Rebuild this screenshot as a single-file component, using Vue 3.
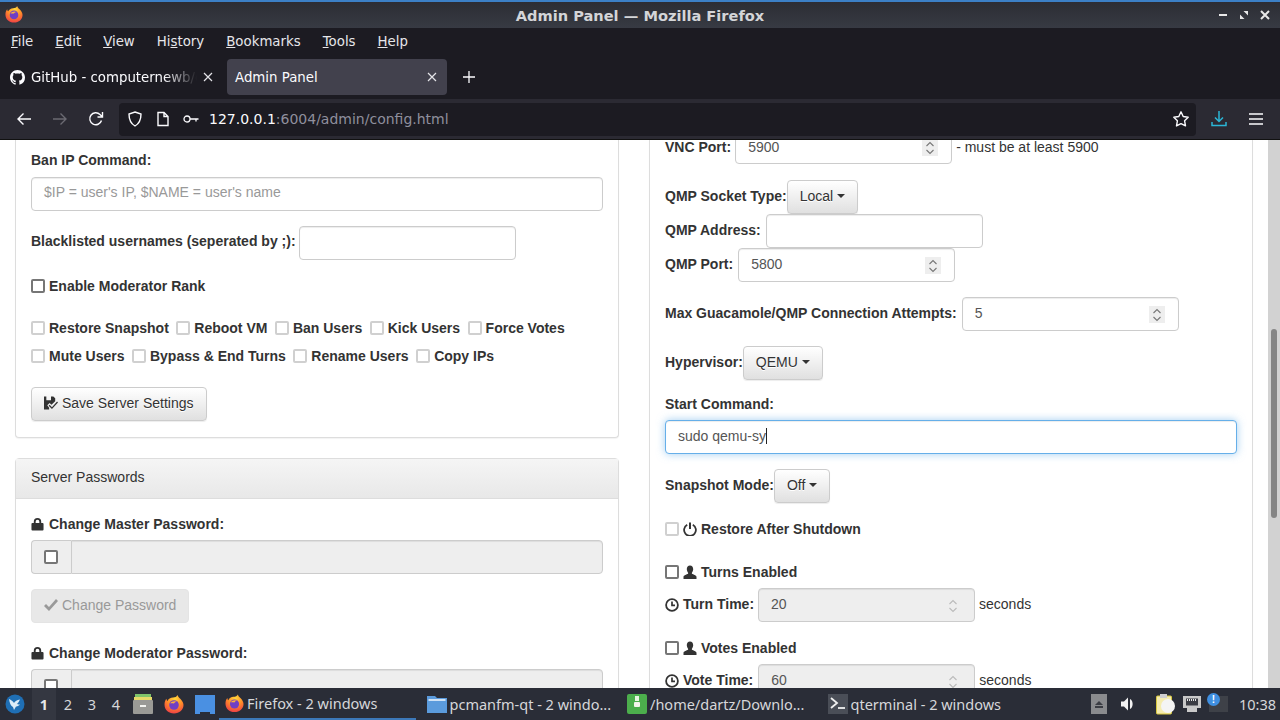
<script setup>
const menus = [
  { pre: '', key: 'F', post: 'ile' },
  { pre: '', key: 'E', post: 'dit' },
  { pre: '', key: 'V', post: 'iew' },
  { pre: 'Hi', key: 's', post: 'tory' },
  { pre: '', key: 'B', post: 'ookmarks' },
  { pre: '', key: 'T', post: 'ools' },
  { pre: '', key: 'H', post: 'elp' }
]
const permsA = ['Restore Snapshot', 'Reboot VM', 'Ban Users', 'Kick Users', 'Force Votes']
const permsB = ['Mute Users', 'Bypass & End Turns', 'Rename Users', 'Copy IPs']
</script>

<template>
  <div class="screen">
    <svg width="0" height="0" class="defs">
      <defs>
        <radialGradient id="fxg" cx="0.55" cy="0.2" r="0.95">
          <stop offset="0" stop-color="#ffd83a" />
          <stop offset="0.45" stop-color="#ff8a2a" />
          <stop offset="1" stop-color="#e8264f" />
        </radialGradient>
        <symbol id="fx" viewBox="0 0 20 20">
          <path d="M13.5 1c.4 1.6 1.4 2.4 3 4 2.2 2.300 3 4.500 3 6 0 4.800-4 8.500-9.500 8.500S.5 15.800.5 10.500C.5 8 1.300 6 2.500 4.700 2.600 6 3 6.800 3.500 7 4.300 5 6.500 3.500 9 3.500c2 0 3.800-.8 4.500-2.500z" fill="url(#fxg)" />
          <circle cx="10" cy="11" r="4.800" fill="#6f3fc4" />
          <path d="M6 9.500c1.500-2.500 5-3 7-1.500-1.500-.2-2.500.3-3 1.500-1.200 0-2.800-.4-4 0z" fill="#ffb03a" />
        </symbol>
        <symbol id="lock" viewBox="0 0 14 14">
          <path d="M3 6V4.500a4 4 0 0 1 8 0V6h1.500a1 1 0 0 1 1 1v6a1 1 0 0 1-1 1h-11a1 1 0 0 1-1-1V7a1 1 0 0 1 1-1zM5 6h4V4.500a2 2 0 0 0-4 0z" fill="#333" />
        </symbol>
        <symbol id="user" viewBox="0 0 14 14">
          <path d="M7 .5c2 0 3.200 1.500 3.200 3.600 0 1.500-.6 2.800-1.300 3.600v1.100c1.500.8 4.600 1.500 4.600 3.200V14H.5v-2c0-1.700 3.100-2.400 4.600-3.200V7.700C4.400 6.900 3.800 5.600 3.800 4.100 3.800 2 5 .5 7 .5z" fill="#333" />
        </symbol>
        <symbol id="clock" viewBox="0 0 14 14">
          <circle cx="7" cy="7" r="5.900" fill="none" stroke="#333" stroke-width="1.800" />
          <path d="M7 3.400V7.300H10" fill="none" stroke="#333" stroke-width="1.700" />
        </symbol>
        <symbol id="power" viewBox="0 0 14 14">
          <path d="M4.200 2.800a5.900 5.900 0 1 0 5.600 0" fill="none" stroke="#333" stroke-width="1.800" />
          <path d="M7 .5V7" fill="none" stroke="#333" stroke-width="2" />
        </symbol>
        <symbol id="spin" viewBox="0 0 10 16">
          <path d="M1.500 6 5 2.500 8.500 6M1.500 10 5 13.500 8.500 10" fill="none" stroke="currentColor" stroke-width="1.100" />
        </symbol>
      </defs>
    </svg>

    <header class="titlebar">
      <svg class="title-logo" width="18" height="20"><use href="#fx" /></svg>
      <div class="title-text">Admin Panel — Mozilla Firefox</div>
      <div class="wm">
        <svg width="10" height="10" viewBox="0 0 10 10"><path d="M1 5h8" stroke="#e8e8e8" stroke-width="2" /></svg>
        <svg width="10" height="10" viewBox="0 0 10 10"><path d="M1 9V4.500L5.500 9zM9 1v4.500L4.500 1z" fill="#e8e8e8" /></svg>
        <svg width="10" height="10" viewBox="0 0 10 10"><path d="M1 1l8 8M9 1l-8 8" stroke="#e8e8e8" stroke-width="2" /></svg>
      </div>
    </header>

    <nav class="menubar">
      <span v-for="m in menus" :key="m.key" class="menu-item">{{ m.pre }}<u>{{ m.key }}</u>{{ m.post }}</span>
    </nav>

    <div class="tabbar">
      <div class="tab">
        <svg width="15" height="15" viewBox="0 0 16 16"><path fill="#fbfbfe" d="M8 0C3.580 0 0 3.580 0 8c0 3.540 2.290 6.530 5.470 7.590.4.070.55-.17.55-.38 0-.19-.010-.82-.010-1.490-2.010.37-2.530-.49-2.690-.94-.090-.23-.48-.94-.82-1.130-.28-.15-.68-.52-.010-.53.630-.010 1.080.58 1.230.82.720 1.210 1.870.87 2.330.66.070-.52.280-.87.510-1.070-1.780-.2-3.640-.89-3.640-3.950 0-.87.310-1.590.820-2.150-.080-.2-.36-1.020.080-2.120 0 0 .67-.21 2.200.82.640-.18 1.320-.27 2-.27s1.360.090 2 .27c1.530-1.040 2.200-.82 2.200-.82.440 1.100.160 1.920.080 2.120.510.560.820 1.270.820 2.150 0 3.070-1.870 3.750-3.650 3.950.290.250.540.730.540 1.480 0 1.070-.010 1.930-.010 2.200 0 .21.150.460.550.380A8.010 8.010 0 0 0 16 8c0-4.420-3.580-8-8-8z" /></svg>
        <span class="tab-label fade">GitHub - computernewb/c</span>
        <svg class="tab-x" width="10" height="10" viewBox="0 0 10 10"><path d="M1 1l8 8M9 1l-8 8" stroke="#e4e4e8" stroke-width="1.200" /></svg>
      </div>
      <div class="tab active">
        <span class="tab-label">Admin Panel</span>
        <svg class="tab-x" width="10" height="10" viewBox="0 0 10 10"><path d="M1 1l8 8M9 1l-8 8" stroke="#e4e4e8" stroke-width="1.200" /></svg>
      </div>
      <svg class="plus" width="14" height="14" viewBox="0 0 14 14"><path d="M7 1v12M1 7h12" stroke="#fbfbfe" stroke-width="1.300" /></svg>
    </div>

    <div class="navbar">
      <svg class="nav-ic" width="16" height="16" viewBox="0 0 16 16"><path d="M15 8H2M7.500 2.500 2 8l5.500 5.500" fill="none" stroke="#fbfbfe" stroke-width="1.400" /></svg>
      <svg class="nav-ic" width="16" height="16" viewBox="0 0 16 16"><path d="M1 8h13M8.500 2.500 14 8l-5.500 5.500" fill="none" stroke="#6b6a72" stroke-width="1.400" /></svg>
      <svg class="nav-ic" width="16" height="16" viewBox="0 0 16 16"><path d="M13.500 9.500A6 6 0 1 1 12 3.500L14 5.500M14.500 1v5h-5" fill="none" stroke="#fbfbfe" stroke-width="1.400" /></svg>
      <div class="urlbar">
        <svg width="16" height="16" viewBox="0 0 16 16"><path d="M8 1l6 2c0 5.500-1.500 9.500-6 12C3.500 12.500 2 8.500 2 3z" fill="none" stroke="#fbfbfe" stroke-width="1.400" /></svg>
        <svg class="doc" width="14" height="16" viewBox="0 0 14 16"><path d="M2 1.500h6l4 4v9H2zM8 1.500v4h4" fill="none" stroke="#fbfbfe" stroke-width="1.400" /></svg>
        <svg class="key" width="16" height="10" viewBox="0 0 16 10"><circle cx="4" cy="5" r="3" fill="none" stroke="#fbfbfe" stroke-width="1.300" /><path d="M7 5h8.500M13 5v2.500" fill="none" stroke="#fbfbfe" stroke-width="1.300" /></svg>
        <span class="url"><b>127.0.0.1</b>:6004/admin/config.html</span>
        <svg class="star" width="18" height="18" viewBox="0 0 18 18"><path d="M9 1.800l2.200 4.700 5 .7-3.600 3.600.9 5.100L9 13.600l-4.500 2.300.9-5.100L1.800 7.200l5-.7z" fill="none" stroke="#fbfbfe" stroke-width="1.400" stroke-linejoin="round" /></svg>
      </div>
      <svg class="dl" width="16" height="18" viewBox="0 0 16 18"><path d="M8 1v10M4 7.500 8 11.500l4-4M1 12v3.500h14V12" fill="none" stroke="#2bb6d6" stroke-width="1.500" /></svg>
      <svg class="burger" width="14" height="12" viewBox="0 0 14 12"><path d="M0 1h14M0 6h14M0 11h14" stroke="#fbfbfe" stroke-width="1.300" /></svg>
    </div>

    <main class="page">
      <div class="cols">
        <section class="col">
          <div class="panel clip-top">
            <div class="panel-body first">
              <div class="label">Ban IP Command:</div>
              <div class="input full placeholder g7">$IP = user's IP, $NAME = user's name</div>
              <div class="row g15 tight-left">
                <span class="label">Blacklisted usernames (seperated by ;):</span>
                <div class="input"></div>
              </div>
              <label class="check g16"><i class="box dark"></i><span class="label">Enable Moderator Rank</span></label>
              <div class="checks g22">
                <label v-for="p in permsA" :key="p" class="check"><i class="box"></i><span class="label">{{ p }}</span></label>
              </div>
              <div class="checks g8">
                <label v-for="p in permsB" :key="p" class="check"><i class="box"></i><span class="label">{{ p }}</span></label>
              </div>
              <button class="btn g21">
                <svg width="14" height="14" viewBox="0 0 15 14"><path d="M0 0h10l2 2v3L8 9 6 7 3.500 9.500 5.500 12v2H0zM2.500 0v4h5V0zM14 5.500l1 1-6.500 7L5 10l1-1 2.500 2.500z" fill="#333" fill-rule="evenodd" /></svg>
                Save Server Settings
              </button>
            </div>
          </div>

          <div class="panel second">
            <div class="panel-heading">Server Passwords</div>
            <div class="panel-body">
              <div class="label with-ic"><svg width="13" height="14"><use href="#lock" /></svg>Change Master Password:</div>
              <div class="group g6">
                <div class="addon"><i class="box dark"></i></div>
                <div class="input grow disabled"></div>
              </div>
              <button class="btn off g15">
                <svg width="14" height="12" viewBox="0 0 14 12"><path d="M0 7l2-2 3 3 7-8 2 2-9 10z" fill="#999" /></svg>
                Change Password
              </button>
              <div class="label with-ic g20"><svg width="13" height="14"><use href="#lock" /></svg>Change Moderator Password:</div>
              <div class="group g6">
                <div class="addon"><i class="box dark"></i></div>
                <div class="input grow disabled"></div>
              </div>
            </div>
          </div>
        </section>

        <section class="col">
          <div class="panel clip-top">
            <div class="panel-body right">
              <div class="row up10">
                <span class="label">VNC Port:</span>
                <div class="input num">5900<span class="spin"><svg width="10" height="16"><use href="#spin" /></svg></span></div>
                <span class="note">- must be at least 5900</span>
              </div>
              <div class="row flush g16">
                <span class="label">QMP Socket Type:</span>
                <button class="btn tight">Local <i class="caret"></i></button>
              </div>
              <div class="row wide">
                <span class="label">QMP Address:</span>
                <div class="input"></div>
              </div>
              <div class="row wide">
                <span class="label">QMP Port:</span>
                <div class="input num">5800<span class="spin"><svg width="10" height="16"><use href="#spin" /></svg></span></div>
              </div>
              <div class="row wide g15">
                <span class="label">Max Guacamole/QMP Connection Attempts:</span>
                <div class="input num">5<span class="spin"><svg width="10" height="16"><use href="#spin" /></svg></span></div>
              </div>
              <div class="row flush g15">
                <span class="label">Hypervisor:</span>
                <button class="btn tight">QEMU <i class="caret"></i></button>
              </div>
              <div class="label g14">Start Command:</div>
              <div class="input full focus g6">sudo qemu-sy<i class="cursor"></i></div>
              <div class="row flush g15">
                <span class="label">Snapshot Mode:</span>
                <button class="btn tight">Off <i class="caret"></i></button>
              </div>
              <label class="check g16"><i class="box"></i><svg width="14" height="14"><use href="#power" /></svg><span class="label">Restore After Shutdown</span></label>
              <label class="check g23"><i class="box dark"></i><svg width="14" height="14"><use href="#user" /></svg><span class="label">Turns Enabled</span></label>
              <div class="row g6">
                <svg width="14" height="14"><use href="#clock" /></svg>
                <span class="label">Turn Time:</span>
                <div class="input num disabled">20<span class="spin pale"><svg width="10" height="16"><use href="#spin" /></svg></span></div>
                <span class="note">seconds</span>
              </div>
              <label class="check g16"><i class="box dark"></i><svg width="14" height="14"><use href="#user" /></svg><span class="label">Votes Enabled</span></label>
              <div class="row g6 vote">
                <svg width="14" height="14"><use href="#clock" /></svg>
                <span class="label">Vote Time:</span>
                <div class="input num disabled">60<span class="spin pale"><svg width="10" height="16"><use href="#spin" /></svg></span></div>
                <span class="note">seconds</span>
              </div>
            </div>
          </div>
        </section>
      </div>
      <div class="scrollbar"><div class="thumb"></div></div>
    </main>

    <footer class="taskbar">
      <svg class="start" width="20" height="20" viewBox="0 0 20 20">
        <circle cx="10" cy="10" r="9.500" fill="#1f6fb5" />
        <path d="M4 5c2 1 4 2 5 4 1-2 3-3 6-3.500-1 2-2 3.500-3 4.500 1 .5 2 .5 3 .5-1.500 1.500-3 2-4 2l-2 3.500-1-3C6 12 4.500 9 4 5z" fill="#dcecf8" />
      </svg>
      <div class="desks">
        <span class="desk on">1</span><span class="desk">2</span><span class="desk">3</span><span class="desk">4</span>
      </div>
      <div class="launch">
        <svg width="20" height="22" viewBox="0 0 20 22">
          <rect x="2" y="1" width="16" height="3" fill="#7fc46a" /><rect x="1" y="4" width="18" height="3" fill="#e6d96a" />
          <rect x="0" y="7" width="20" height="14" rx="1" fill="#9a9a96" /><rect x="7" y="12" width="6" height="2" fill="#f4f4f0" />
        </svg>
        <svg width="20" height="22"><use href="#fx" /></svg>
        <svg width="20" height="20" viewBox="0 0 20 20"><path d="M0 1h20v19h-5v-2H5v2H0z" fill="#4a90e2" /></svg>
      </div>
      <div class="tasks">
        <div class="task current">
          <svg width="19" height="20"><use href="#fx" /></svg><span>Firefox - 2 windows</span>
        </div>
        <div class="task">
          <svg width="20" height="20" viewBox="0 0 20 20"><path d="M0 2h8l2 2h10v15H0z" fill="#5b9bdc" /><rect x="1.500" y="5" width="17" height="2" fill="#cfe2f5" /></svg><span>pcmanfm-qt - 2 windo...</span>
        </div>
        <div class="task">
          <svg width="20" height="22" viewBox="0 0 20 22"><rect y="1" width="20" height="20" rx="2" fill="#4cae4c" /><rect x="8" y="3" width="4" height="5" fill="#e8f5e0" /><rect x="7" y="9" width="6" height="5" rx="1" fill="#f4f4ec" /></svg><span>/home/dartz/Downlo...</span>
        </div>
        <div class="task">
          <svg width="20" height="20" viewBox="0 0 20 20"><rect width="20" height="20" fill="#4a4e57" /><path d="M3 4l6 5-6 5" fill="none" stroke="#f0f0f0" stroke-width="1.800" /><path d="M10 14h7" stroke="#f0f0f0" stroke-width="1.800" /></svg><span>qterminal - 2 windows</span>
        </div>
      </div>
      <div class="tray">
        <div class="tray-up"><svg width="8" height="7" viewBox="0 0 8 7"><path d="M4 0l4 4H0zM0 5h8v2H0z" fill="#3b3d44" /></svg></div>
        <svg class="vol" width="16" height="16" viewBox="0 0 16 16"><path d="M1 5.500h3L8 1.500v13l-4-4H1z" fill="#f2f2f2" /><path d="M10 3c3.500 1.500 3.500 8.500 0 10z" fill="#f2f2f2" /></svg>
        <svg class="clip" width="20" height="22" viewBox="0 0 20 22"><rect x="0.500" y="3" width="15" height="18" rx="1" fill="#f5ecb0" stroke="#d8c840" /><circle cx="12" cy="13" r="7" fill="#f4f4f4" /><rect x="4" y="1" width="7" height="4" fill="#cfcfcf" /></svg>
        <svg class="net" width="20" height="18" viewBox="0 0 20 18"><path d="M1 1h18v12h-4v4H5v-4H1z" fill="#c9c9c9" /><rect x="4" y="3.500" width="12" height="7" fill="#3b3d44" /><path d="M5 5h10" stroke="#e8e8e8" stroke-dasharray="1 1" stroke-width="2" /></svg>
        <div class="notify"><i class="bubble">!</i></div>
        <span class="clock">10:38</span>
      </div>
    </footer>
  </div>
</template>

<style>
html, body { margin: 0; background: #fff; overflow: hidden; }
</style>

<style scoped>
.defs { position: absolute; }
.screen { width: 1280px; height: 720px; display: flex; flex-direction: column; overflow: hidden; font-family: "Liberation Sans", Arial, sans-serif; font-size: 14px; color: #333; background: #fff; }

.titlebar { height: 26px; flex: none; border-top: 2px solid #3c80c6; background: linear-gradient(#2c2d34, #373a43); display: flex; align-items: center; padding-left: 5px; }
.title-logo { flex: none; margin-top: -2px; }
.title-text { flex: 1; margin-left: -23px; margin-right: -62px; text-align: center; font: bold 14.600px "DejaVu Sans", sans-serif; color: #d4d5d8; }
.wm { display: flex; gap: 11px; padding-right: 10px; }

.menubar { height: 27px; flex: none; box-sizing: border-box; padding: 0 0 0 11px; background: #1c1b22; display: flex; align-items: center; gap: 22px; font: 13.330px "DejaVu Sans", sans-serif; color: #e6e6ea; }
.menu-item { white-space: nowrap; }

.tabbar { height: 44px; flex: none; background: #1c1b22; display: flex; align-items: center; padding-left: 2px; font: 13.330px "DejaVu Sans", sans-serif; color: #fbfbfe; }
.tab { width: 219px; height: 36px; flex: none; display: flex; align-items: center; gap: 6px; padding: 0 8px; box-sizing: border-box; border-radius: 4px; margin-right: 6px; }
.tab.active { width: 220px; background: #42414d; margin-right: 0; padding-right: 10px; }
.tab-label { flex: 1; min-width: 0; white-space: nowrap; }
.fade { -webkit-mask-image: linear-gradient(90deg, #000 80%, transparent 100%); mask-image: linear-gradient(90deg, #000 80%, transparent 100%); }
.tab-x { flex: none; }
.plus { margin-left: 15px; }

.navbar { height: 41px; flex: none; box-sizing: border-box; background: #2b2a33; border-bottom: 1px solid #111; display: flex; align-items: center; padding-left: 16px; font: 14px "DejaVu Sans", sans-serif; }
.nav-ic { flex: none; margin-right: 20px; }
.nav-ic:nth-child(3) { margin-right: 15px; }
.urlbar { width: 1077px; height: 33px; flex: none; box-sizing: border-box; background: #1c1b22; border-radius: 4px; display: flex; align-items: center; padding-left: 8px; color: #8f8f9d; }
.doc { margin-left: 13px; }
.key { margin-left: 13px; }
.url { margin-left: 10px; white-space: nowrap; font-size: 14px; }
.url b { font-weight: normal; color: #fbfbfe; }
.star { margin-left: auto; margin-right: 6px; }
.dl { margin-left: 15px; }
.burger { margin-left: 22px; }

.page { flex: 1; min-height: 0; position: relative; overflow: hidden; background: #fff; }
.cols { display: flex; gap: 30px; padding-left: 15px; align-items: flex-start; }
.col { width: 604px; flex: none; }
.panel { border: 1px solid #ddd; border-radius: 4px; box-sizing: border-box; background: #fff; box-shadow: 0 1px 1px rgba(0,0,0,.05); }
.clip-top { border-top: 0; border-top-left-radius: 0; border-top-right-radius: 0; }
.second { margin-top: 20px; }
.panel-heading { height: 40px; box-sizing: border-box; padding: 8px 15px; line-height: 20px; background: linear-gradient(#f5f5f5, #e8e8e8); border-bottom: 1px solid #ddd; }
.panel-body { padding: 15px; display: flow-root; }
.panel-body.first { padding-top: 10px; padding-bottom: 16px; }
.panel-body.right { padding-top: 0; }
.label { font-weight: bold; line-height: 20px; white-space: nowrap; color: #333; }
.with-ic { display: flex; align-items: center; gap: 5px; }
.row { display: flex; align-items: center; gap: 4px; height: 34px; }
.row > .label { margin-top: -2px; }
.row.wide { gap: 5px; }
.row.flush { gap: 0; }
.row.tight-left { gap: 3px; }
.row.tight-left > .label { margin-top: -4px; }
.row.up10 { margin-top: -10px; }
.row.up10 > .label { margin-top: 0; }
.vote .input { margin-left: 1px; }
.input { width: 217px; height: 34px; box-sizing: border-box; flex: none; padding: 5px 12px 7px; line-height: 20px; color: #555; border: 1px solid #ccc; border-radius: 4px; background: #fff; box-shadow: inset 0 1px 1px rgba(0,0,0,.075); position: relative; }
.up10 .input { padding: 6px 12px; }
.input.full { width: 100%; }
.input.grow { flex: 1; width: auto; border-radius: 0 4px 4px 0; }
.placeholder { color: #999; padding-top: 4px; }
.disabled { background: #eee; }
.focus { border-color: #66afe9; box-shadow: inset 0 1px 1px rgba(0,0,0,.075), 0 0 8px rgba(102,175,233,.6); display: flex; align-items: center; }
.cursor { display: block; width: 1px; height: 16px; background: #222; }
.spin { position: absolute; right: 13px; top: 8px; width: 16px; height: 17px; display: flex; align-items: center; justify-content: center; background: #eee; color: #777; }
.spin.pale { background: transparent; color: #bbb; }
.note { white-space: nowrap; margin-top: -2px; }
.up10 .note { margin-top: 0; }
.check { display: flex; align-items: center; gap: 4px; height: 20px; }
.box { display: block; width: 14px; height: 14px; flex: none; box-sizing: border-box; border: 2px solid #d0d0d0; border-radius: 2px; background: #fff; }
.box.dark { border-color: #767676; }
.checks { display: flex; gap: 7.500px; }
.btn { display: flex; align-items: center; gap: 4px; height: 34px; box-sizing: border-box; padding: 5px 12px 7px; font: 14px "Liberation Sans", Arial, sans-serif; color: #333; border: 1px solid #ccc; border-radius: 4px; background: linear-gradient(#fff, #e0e0e0); box-shadow: inset 0 1px 0 rgba(255,255,255,.15), 0 1px 1px rgba(0,0,0,.075); text-shadow: 0 1px 0 #fff; white-space: nowrap; }
.btn.off { background: #e8e8e8; border-color: #e4e4e4; color: #999; box-shadow: none; text-shadow: none; }
.caret { display: inline-block; width: 0; height: 0; border-top: 4px solid #333; border-left: 4px solid transparent; border-right: 4px solid transparent; }
.tight { gap: 4px; flex: none; }
.group { display: flex; height: 34px; }
.addon { width: 40px; flex: none; box-sizing: border-box; display: flex; align-items: center; justify-content: center; padding-right: 2px; border: 1px solid #ccc; border-right: 0; border-radius: 4px 0 0 4px; background: #eee; }
.g6 { margin-top: 6px; }
.g7 { margin-top: 7px; }
.g8 { margin-top: 8px; }
.g14 { margin-top: 14px; }
.g15 { margin-top: 15px; }
.g16 { margin-top: 16px; }
.g20 { margin-top: 20px; }
.g21 { margin-top: 21px; }
.g22 { margin-top: 22px; }
.g23 { margin-top: 23px; }

.scrollbar { position: absolute; right: 0; top: 0; bottom: 0; width: 12px; background: #d2d2d2; }
.thumb { position: absolute; left: 3px; width: 6px; top: 189px; height: 189px; background: #858585; border-radius: 3px; }

.taskbar { height: 32px; flex: none; background: #2a2d37; display: flex; align-items: center; padding-left: 5px; font: 14.500px "Noto Sans", sans-serif; color: #d6d7da; position: relative; }
.start { flex: none; }
.desks { display: flex; margin-left: 7px; }
.desk { width: 24px; height: 32px; line-height: 32px; text-align: center; }
.desk.on { background: #343741; font-weight: bold; color: #e8e8e8; }
.launch { display: flex; align-items: center; gap: 11px; margin-left: 5px; width: 92px; flex: none; box-sizing: border-box; }
.launch svg { flex: none; }
.tasks { display: flex; margin-left: -6px; }
.task { width: 200.500px; height: 32px; box-sizing: border-box; flex: none; display: flex; align-items: center; gap: 3px; padding: 0 7px; white-space: nowrap; }
.task svg { flex: none; }
.task.current { border-bottom: 2px solid #3c78b8; width: 197px; margin-right: 3.500px; padding-left: 6px; }
.tray { position: absolute; right: 4px; top: 0; height: 32px; display: flex; align-items: center; }
.tray-up { width: 16px; height: 20px; background: #8a8b8e; display: flex; align-items: center; justify-content: center; }
.vol { margin-left: 13px; }
.clip { margin-left: 20px; }
.net { margin-left: 6px; }
.notify { margin-left: 7px; width: 19px; height: 16px; background: #3e4148; position: relative; margin-right: 11px; }
.bubble { position: absolute; left: -2px; top: -3px; width: 13px; height: 13px; border-radius: 50%; background: #3f8fe0; color: #fff; font: bold 10px/13px "Liberation Sans", sans-serif; text-align: center; }
.clock { white-space: nowrap; }
</style>
